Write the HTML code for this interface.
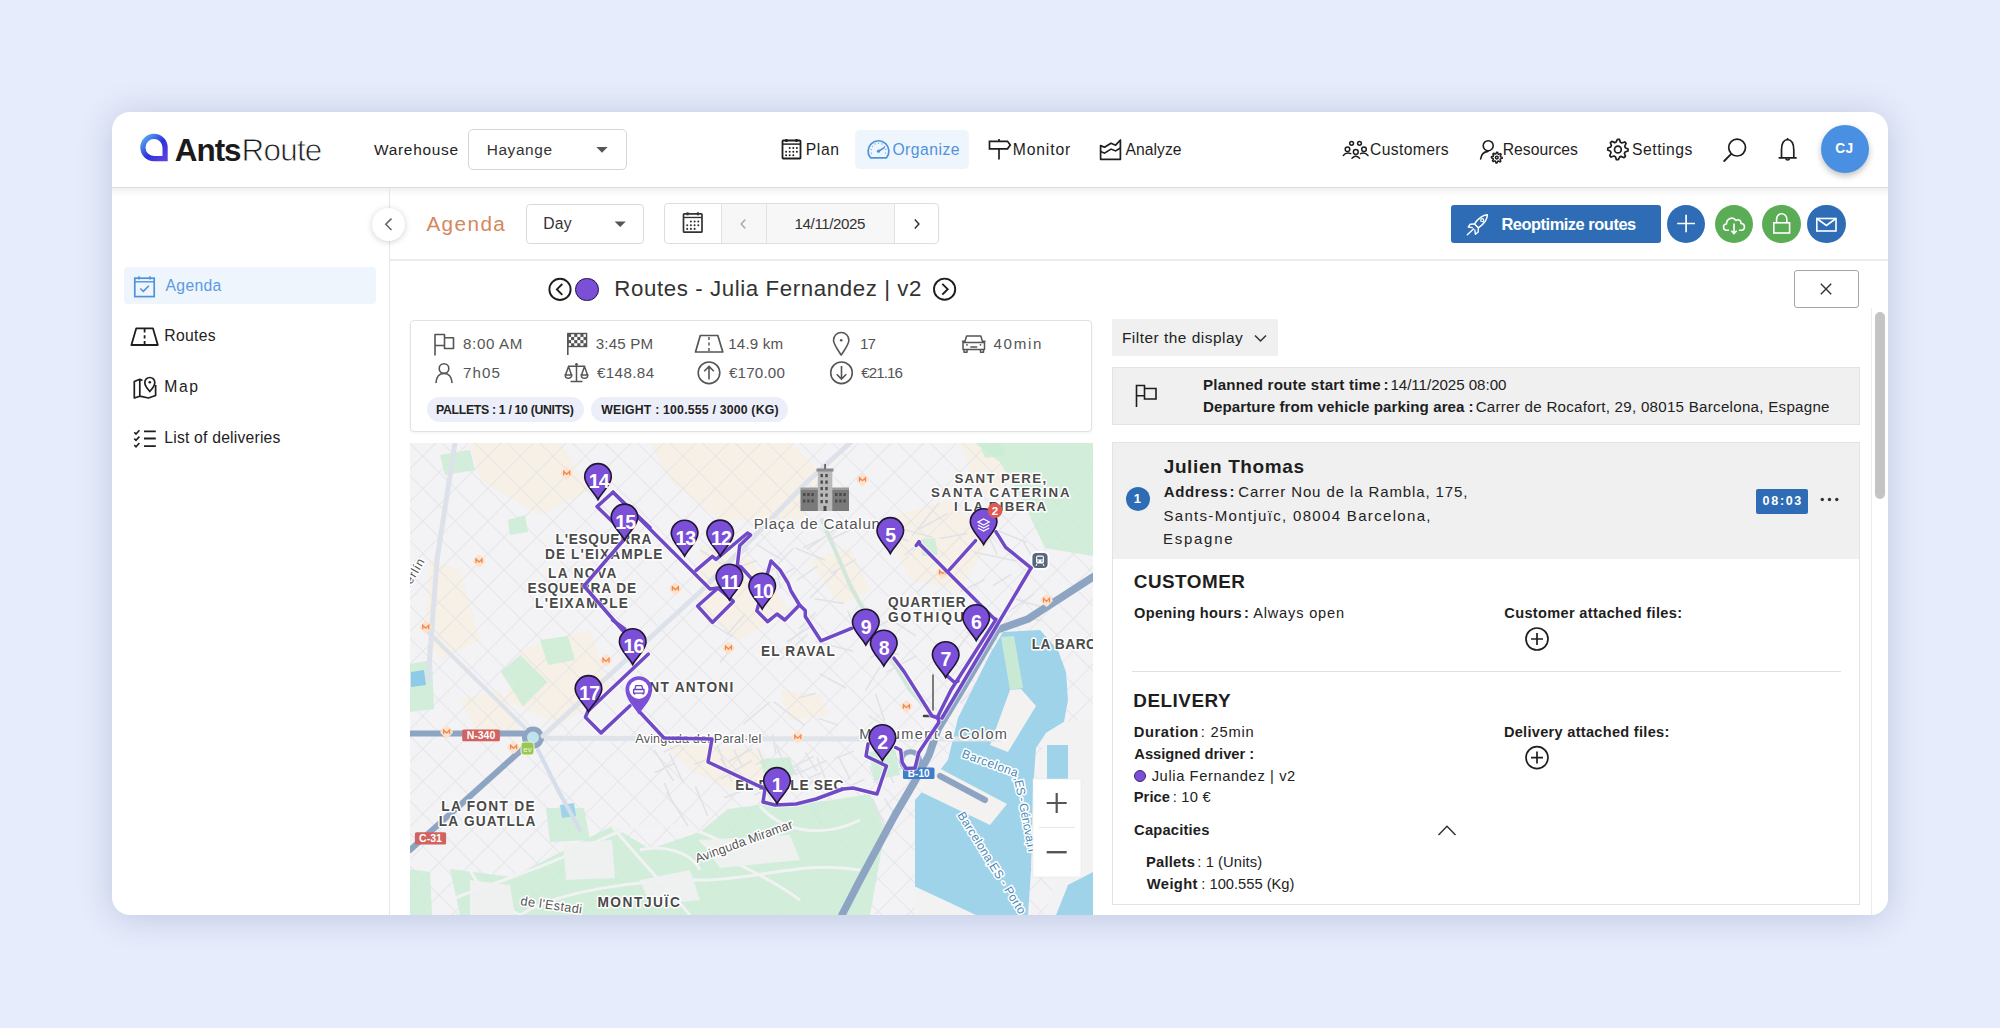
<!DOCTYPE html>
<html><head><meta charset="utf-8"><style>
*{margin:0;padding:0;box-sizing:border-box}
html,body{width:2000px;height:1028px;overflow:hidden}
body{background:#e6ecfb;font-family:"Liberation Sans",sans-serif;position:relative}
.t{position:absolute;white-space:nowrap;font-family:"Liberation Sans",sans-serif}
.a{position:absolute}
</style></head>
<body>
<div class="a" style="left:112px;top:112px;width:1776px;height:803px;background:#fff;border-radius:18px;box-shadow:0 3px 34px rgba(60,70,130,0.22)"></div>
<div class="a" style="left:112px;top:187px;width:1776px;height:1px;background:#dcdcdc"></div>
<div class="a" style="left:112px;top:188px;width:1776px;height:8px;background:linear-gradient(rgba(0,0,0,0.06),rgba(0,0,0,0))"></div>
<div class="a" style="left:389px;top:196px;width:1px;height:719px;background:#e6e6e6"></div>
<div class="a" style="left:389px;top:188px;width:1px;height:8px;background:#e6e6e6"></div>
<div class="a" style="left:390px;top:259px;width:1498px;height:2px;background:#ececec"></div>
<div class="a" style="left:468px;top:129px;width:159px;height:41px;border:1px solid #d6d6d6;border-radius:5px;background:#fff"></div>
<div class="a" style="left:526px;top:204px;width:118px;height:40px;border:1px solid #d9d9d9;border-radius:4px;background:#fff"></div>
<div class="a" style="left:855px;top:130px;width:114px;height:39px;background:#eef5fd;border-radius:5px"></div>
<div class="a" style="left:124px;top:267px;width:252px;height:37px;background:#eef5fd;border-radius:4px"></div>
<div class="a" style="left:664px;top:203px;width:275px;height:41px;border:1px solid #dedede;border-radius:4px;background:#fff"></div>
<div class="a" style="left:721px;top:204px;width:173px;height:39px;background:#f7f7f7"></div>
<div class="a" style="left:721px;top:204px;width:1px;height:39px;background:#e2e2e2"></div>
<div class="a" style="left:766px;top:204px;width:1px;height:39px;background:#e2e2e2"></div>
<div class="a" style="left:894px;top:204px;width:1px;height:39px;background:#e2e2e2"></div>
<div class="a" style="left:1451px;top:205px;width:210px;height:38px;background:#2e6db5;border-radius:3px"></div>
<div class="a" style="left:1666.75px;top:204.75px;width:38.5px;height:38.5px;border-radius:50%;background:#2e6db5"></div>
<div class="a" style="left:1714.75px;top:204.75px;width:38.5px;height:38.5px;border-radius:50%;background:#5aac55"></div>
<div class="a" style="left:1762.25px;top:204.75px;width:38.5px;height:38.5px;border-radius:50%;background:#5aac55"></div>
<div class="a" style="left:1807.25px;top:204.75px;width:38.5px;height:38.5px;border-radius:50%;background:#2e6db5"></div>
<div class="a" style="left:1820.5px;top:125px;width:48px;height:48px;border-radius:50%;background:#4a90e2;box-shadow:0 3px 6px rgba(0,0,0,0.25)"></div>
<div class="a" style="left:372.2px;top:207.8px;width:33px;height:33px;border-radius:50%;background:#fff;box-shadow:0 1px 6px rgba(0,0,0,0.18)"></div>
<div class="a" style="left:1794px;top:270px;width:65px;height:38px;border:1px solid #a5a5a5;border-radius:3px;background:#fff"></div>
<div class="a" style="left:410px;top:320px;width:682px;height:112px;border:1px solid #e2e2e2;border-radius:4px;background:#fff;box-shadow:0 1px 3px rgba(0,0,0,0.06)"></div>
<div class="a" style="left:426.6px;top:397px;width:157.2px;height:25px;border-radius:12.5px;background:#eceff9"></div>
<div class="a" style="left:590.8px;top:397px;width:197.7px;height:25px;border-radius:12.5px;background:#eceff9"></div>
<div class="a" style="left:1112px;top:319px;width:166px;height:37px;background:#f0f0f0;border-radius:2px"></div>
<div class="a" style="left:1112px;top:367px;width:748px;height:58px;background:#f0f0f0;border:1px solid #e3e3e3"></div>
<div class="a" style="left:1112px;top:442px;width:748px;height:463px;background:#fff;border:1px solid #e3e3e3"></div>
<div class="a" style="left:1113px;top:443px;width:746px;height:116px;background:#f0f0f0"></div>
<div class="a" style="left:1756px;top:489px;width:52px;height:25px;background:#2e6db5;border-radius:2px"></div>
<div class="a" style="left:1125.7px;top:486.6px;width:24px;height:24px;border-radius:50%;background:#2e6db5"></div>
<div class="a" style="left:1132px;top:671px;width:709px;height:1px;background:#e0e0e0"></div>
<div class="a" style="left:1134.2px;top:770px;width:12px;height:12px;border-radius:50%;background:#7b4fd6;border:1px solid #3a2870"></div>
<div class="a" style="left:1871px;top:308px;width:17px;height:607px;background:#fff;border-left:1px solid #ececec;border-bottom-right-radius:17px"></div>
<div class="a" style="left:1875px;top:312px;width:10px;height:187px;background:#c4c4c4;border-radius:5px"></div>
<div class="a" style="left:575.2px;top:277.7px;width:23.4px;height:23.4px;border-radius:50%;background:#7b4fd6;border:1.5px solid #1f1545"></div>
<svg class="a" style="left:0;top:0" width="2000" height="1028" viewBox="0 0 2000 1028">
<defs><linearGradient id="lg" x1="0" y1="0" x2="1" y2="1"><stop offset="0" stop-color="#5ab0f0"/><stop offset="0.55" stop-color="#2a35d8"/><stop offset="1" stop-color="#5b3fe6"/></linearGradient></defs>
<path d="M154,158.6 A11.1,11.1 0 1 1 165.1,147.5 L165.1,158.6 Z" fill="none" stroke="url(#lg)" stroke-width="5.2"/>
<path d="M596.4,147 L607.7,147 L602,152.8Z" fill="#555"/>
<path d="M614.6,221.4 L625.8,221.4 L620.2,227Z" fill="#555"/>
<rect x="782.5" y="140.5" width="18.0" height="18.0" fill="none" stroke="#1e1e1e" stroke-width="1.8" rx="0.8"/><line x1="782.5" y1="144.1" x2="800.5" y2="144.1" stroke="#1e1e1e" stroke-width="1.4400000000000002"/><line x1="786.46" y1="139.0" x2="786.46" y2="142.0" stroke="#1e1e1e" stroke-width="2.16"/><line x1="796.54" y1="139.0" x2="796.54" y2="142.0" stroke="#1e1e1e" stroke-width="2.16"/><circle cx="789.70" cy="148.06" r="0.99" fill="#1e1e1e"/><circle cx="793.30" cy="148.06" r="0.99" fill="#1e1e1e"/><circle cx="796.90" cy="148.06" r="0.99" fill="#1e1e1e"/><circle cx="786.10" cy="151.66" r="0.99" fill="#1e1e1e"/><circle cx="789.70" cy="151.66" r="0.99" fill="#1e1e1e"/><circle cx="793.30" cy="151.66" r="0.99" fill="#1e1e1e"/><circle cx="796.90" cy="151.66" r="0.99" fill="#1e1e1e"/><circle cx="786.10" cy="155.26" r="0.99" fill="#1e1e1e"/><circle cx="789.70" cy="155.26" r="0.99" fill="#1e1e1e"/><circle cx="793.30" cy="155.26" r="0.99" fill="#1e1e1e"/>
<path d="M870.5,157.8 A10.4,10.4 0 1 1 886.5,157.8 Z" fill="none" stroke="#4f92dc" stroke-width="1.7" stroke-linejoin="round"/>
<line x1="878.5" y1="151.2" x2="884.3" y2="147.6" stroke="#4f92dc" stroke-width="1.6" stroke-linecap="round"/><circle cx="878.5" cy="151.2" r="1.6" fill="#4f92dc"/>
<circle cx="871.55" cy="153.03" r="0.6" fill="#4f92dc"/>
<circle cx="871.16" cy="149.53" r="0.6" fill="#4f92dc"/>
<circle cx="872.44" cy="146.26" r="0.6" fill="#4f92dc"/>
<circle cx="875.08" cy="143.94" r="0.6" fill="#4f92dc"/>
<circle cx="878.50" cy="143.10" r="0.6" fill="#4f92dc"/>
<circle cx="881.92" cy="143.94" r="0.6" fill="#4f92dc"/>
<circle cx="884.56" cy="146.26" r="0.6" fill="#4f92dc"/>
<circle cx="885.84" cy="149.53" r="0.6" fill="#4f92dc"/>
<circle cx="885.45" cy="153.03" r="0.6" fill="#4f92dc"/>
<path d="M989.5,141.3 L1007.5,141.3 L1010.3,145 L1007.5,148.8 L989.5,148.8 Z" fill="none" stroke="#1e1e1e" stroke-width="1.7"/>
<line x1="999" y1="139" x2="999" y2="141.3" stroke="#1e1e1e" stroke-width="1.7"/><line x1="999" y1="148.8" x2="999" y2="159.5" stroke="#1e1e1e" stroke-width="1.7"/>
<path d="M1100.6,145.6 L1104.5,147.2 L1111,143.2 L1115.6,145.2 L1120.4,140 L1120.4,159.3 L1100.6,159.3 Z" fill="none" stroke="#1e1e1e" stroke-width="1.7" stroke-linejoin="round"/>
<path d="M1100.6,151.5 L1104.5,153.2 L1111,149 L1115.6,151 L1120.4,148" fill="none" stroke="#1e1e1e" stroke-width="1.5"/>
<circle cx="1351.6" cy="143.3" r="1.9" fill="none" stroke="#1e1e1e" stroke-width="1.5"/>
<circle cx="1359.5" cy="143.3" r="1.9" fill="none" stroke="#1e1e1e" stroke-width="1.5"/>
<circle cx="1347.5" cy="149.3" r="2.3" fill="none" stroke="#1e1e1e" stroke-width="1.5"/>
<circle cx="1364" cy="149.3" r="2.3" fill="none" stroke="#1e1e1e" stroke-width="1.5"/>
<circle cx="1355.8" cy="152" r="2.4" fill="none" stroke="#1e1e1e" stroke-width="1.5"/>
<path d="M1343.3,155.5 Q1346,151.8 1350.8,153.6 M1360.5,153.6 Q1365,151.8 1368,155.5 M1352,158.3 Q1355.8,154.4 1359.6,158.3" fill="none" stroke="#1e1e1e" stroke-width="1.5" stroke-linecap="round"/>
<circle cx="1488.2" cy="145.7" r="5" fill="none" stroke="#1e1e1e" stroke-width="1.6"/>
<path d="M1480.6,159 Q1481.5,152.2 1488,151.4" fill="none" stroke="#1e1e1e" stroke-width="1.6" stroke-linecap="round"/>
<path d="M1496.54,152.21 L1497.59,152.26 L1498.08,154.02 L1498.75,154.34 L1500.43,153.60 L1501.14,154.38 L1500.24,155.98 L1500.49,156.68 L1502.19,157.34 L1502.14,158.39 L1500.38,158.88 L1500.06,159.55 L1500.80,161.23 L1500.02,161.94 L1498.42,161.04 L1497.72,161.29 L1497.06,162.99 L1496.01,162.94 L1495.52,161.18 L1494.85,160.86 L1493.17,161.60 L1492.46,160.82 L1493.36,159.22 L1493.11,158.52 L1491.41,157.86 L1491.46,156.81 L1493.22,156.32 L1493.54,155.65 L1492.80,153.97 L1493.58,153.26 L1495.18,154.16 L1495.88,153.91Z" fill="none" stroke="#1e1e1e" stroke-width="1.5" stroke-linejoin="round"/><circle cx="1496.8" cy="157.6" r="1.4" fill="none" stroke="#1e1e1e" stroke-width="1.5"/>
<path d="M1617.40,139.31 L1619.40,139.41 L1620.46,142.34 L1621.81,142.98 L1624.75,141.94 L1626.09,143.42 L1624.77,146.25 L1625.27,147.65 L1628.09,149.00 L1627.99,151.00 L1625.06,152.06 L1624.42,153.41 L1625.46,156.35 L1623.98,157.69 L1621.15,156.37 L1619.75,156.87 L1618.40,159.69 L1616.40,159.59 L1615.34,156.66 L1613.99,156.02 L1611.05,157.06 L1609.71,155.58 L1611.03,152.75 L1610.53,151.35 L1607.71,150.00 L1607.81,148.00 L1610.74,146.94 L1611.38,145.59 L1610.34,142.65 L1611.82,141.31 L1614.65,142.63 L1616.05,142.13Z" fill="none" stroke="#1e1e1e" stroke-width="1.7" stroke-linejoin="round"/><circle cx="1617.9" cy="149.5" r="3.4" fill="none" stroke="#1e1e1e" stroke-width="1.7"/>
<circle cx="1737.1" cy="147.6" r="8.4" fill="none" stroke="#1e1e1e" stroke-width="1.7"/><line x1="1731" y1="154.2" x2="1724.2" y2="161" stroke="#1e1e1e" stroke-width="1.8" stroke-linecap="round"/>
<path d="M1787.6,139.5 C1782,140 1781.5,145 1781.5,150 L1781.5,157.6 L1779.3,157.9 L1796,157.9 L1793.8,157.6 L1793.8,150 C1793.8,145 1793.2,140 1787.6,139.5Z" fill="none" stroke="#1e1e1e" stroke-width="1.7" stroke-linejoin="round"/>
<path d="M1785.7,158.5 A2,2 0 0 0 1789.6,158.5" fill="none" stroke="#1e1e1e" stroke-width="1.5"/><line x1="1787.6" y1="138" x2="1787.6" y2="139.6" stroke="#1e1e1e" stroke-width="1.6"/>
<path d="M391.5,218.6 L385.8,224.3 L391.5,230" fill="none" stroke="#666" stroke-width="1.6"/>
<rect x="683.5" y="213.8" width="18.5" height="18.399999999999977" fill="none" stroke="#333" stroke-width="1.7" rx="0.8"/><line x1="683.5" y1="217.48000000000002" x2="702" y2="217.48000000000002" stroke="#333" stroke-width="1.36"/><line x1="687.57" y1="212.3" x2="687.57" y2="215.3" stroke="#333" stroke-width="2.04"/><line x1="697.93" y1="212.3" x2="697.93" y2="215.3" stroke="#333" stroke-width="2.04"/><circle cx="690.90" cy="221.53" r="1.02" fill="#333"/><circle cx="694.60" cy="221.53" r="1.02" fill="#333"/><circle cx="698.30" cy="221.53" r="1.02" fill="#333"/><circle cx="687.20" cy="225.21" r="1.02" fill="#333"/><circle cx="690.90" cy="225.21" r="1.02" fill="#333"/><circle cx="694.60" cy="225.21" r="1.02" fill="#333"/><circle cx="698.30" cy="225.21" r="1.02" fill="#333"/><circle cx="687.20" cy="228.89" r="1.02" fill="#333"/><circle cx="690.90" cy="228.89" r="1.02" fill="#333"/><circle cx="694.60" cy="228.89" r="1.02" fill="#333"/>
<path d="M745.3,219.5 L741.2,224 L745.3,228.5" fill="none" stroke="#aaa" stroke-width="1.5"/>
<path d="M914.8,219.5 L918.9,224 L914.8,228.5" fill="none" stroke="#333" stroke-width="1.5"/>
<path d="M1487.4,214.8 C1482,215.2 1478.2,218.5 1474.5,224 L1478.4,227.9 C1483.9,224.2 1487.2,220.4 1487.4,214.8Z" fill="none" stroke="#fff" stroke-width="1.5" stroke-linejoin="round"/>
<path d="M1474.5,224 L1470.3,224.2 L1468.3,227 L1472.3,227.6 M1478.4,227.9 L1478.2,232 L1475.4,234.2 L1474.8,230 M1473.5,229 L1467.3,234.8" fill="none" stroke="#fff" stroke-width="1.4" stroke-linejoin="round" stroke-linecap="round"/>
<circle cx="1482.2" cy="220.2" r="1.5" fill="none" stroke="#fff" stroke-width="1.2"/>
<path d="M1677.2,223.5 L1695,223.5 M1686.1,214.8 L1686.1,232.2" stroke="#fff" stroke-width="1.7"/>
<path d="M1729,230.2 L1726.5,230.2 C1722.5,230.2 1722.5,224 1726.5,224 C1726.5,218.5 1733,216 1736,220.5 C1738.5,218.8 1741.5,220.5 1741,223.5 C1745.5,223.5 1745.5,230.2 1741.5,230.2 L1739,230.2" fill="none" stroke="#fff" stroke-width="1.6" stroke-linejoin="round"/>
<path d="M1734,223.5 L1734,233.5 M1731.3,230.8 L1734,233.6 L1736.7,230.8" fill="none" stroke="#fff" stroke-width="1.6"/>
<rect x="1773.8" y="222.8" width="15.8" height="10.2" fill="none" stroke="#fff" stroke-width="1.6"/><path d="M1776.6,222.8 L1776.6,218.8 A5,5 0 0 1 1786.8,218.8 L1786.8,222.8" fill="none" stroke="#fff" stroke-width="1.6"/>
<rect x="1816.8" y="218.5" width="19.2" height="12.5" fill="none" stroke="#fff" stroke-width="1.6"/><path d="M1816.8,218.5 L1826.4,225.5 L1836,218.5" fill="none" stroke="#fff" stroke-width="1.6"/>
<rect x="134.8" y="278.2" width="19.4" height="18.4" fill="none" stroke="#4f92dc" stroke-width="1.7"/><line x1="134.8" y1="281.8" x2="154.2" y2="281.8" stroke="#4f92dc" stroke-width="1.4"/>
<line x1="139" y1="276.2" x2="139" y2="279.5" stroke="#4f92dc" stroke-width="1.6"/><line x1="150" y1="276.2" x2="150" y2="279.5" stroke="#4f92dc" stroke-width="1.6"/>
<path d="M140.3,288.5 L143.4,291.4 L148.8,285.8" fill="none" stroke="#4f92dc" stroke-width="1.6"/>
<path d="M136.2,328.4 L153,328.4 L157.8,345 L131.4,345 Z" fill="none" stroke="#1e1e1e" stroke-width="1.8" stroke-linejoin="round"/>
<path d="M144.6,329 L144.6,332.5 M144.6,335.2 L144.6,338.5 M144.6,341 L144.6,344.5" stroke="#1e1e1e" stroke-width="1.8"/>
<path d="M134.3,381.5 L139.8,379.3 L139.8,396.2 L134.3,398 Z M139.8,379.3 L142.5,380.5 M139.8,396.2 L148.5,398 L155.6,395.5 L155.6,385" fill="none" stroke="#1e1e1e" stroke-width="1.7" stroke-linejoin="round"/>
<path d="M149.8,391.5 C146.2,387.5 144.8,385 144.8,382.5 A5,5 0 0 1 154.8,382.5 C154.8,385 153.4,387.5 149.8,391.5Z" fill="none" stroke="#1e1e1e" stroke-width="1.7"/><circle cx="149.8" cy="382.3" r="1.3" fill="#1e1e1e"/>
<path d="M134.3,432.2 L136,434 L139.4,430.2 M134.3,438.6 L136,440.4 L139.4,436.6 M134.3,445 L136,446.8 L139.4,443" fill="none" stroke="#1e1e1e" stroke-width="1.6"/>
<path d="M144,431.3 L155.8,431.3 M144,438.5 L155.8,438.5 M144,446.2 L155.8,446.2" stroke="#1e1e1e" stroke-width="1.8"/>
<circle cx="560" cy="289.4" r="10.6" fill="none" stroke="#1e1e1e" stroke-width="1.9"/><path d="M562.3,284 L556.9,289.4 L562.3,294.8" fill="none" stroke="#1e1e1e" stroke-width="1.9"/>
<circle cx="944.6" cy="289.2" r="10.6" fill="none" stroke="#1e1e1e" stroke-width="1.9"/><path d="M942.3,283.8 L947.7,289.2 L942.3,294.6" fill="none" stroke="#1e1e1e" stroke-width="1.9"/>
<path d="M1820.8,283.8 L1831.2,294.2 M1831.2,283.8 L1820.8,294.2" stroke="#333" stroke-width="1.4"/>
<path d="M435,355.5 L435,334.5 L444.5,334.5 L444.5,337.8 L453.5,337.8 L453.5,348.5 L444.5,348.5 L444.5,345.5 L435,345.5 M444.5,337.8 L444.5,345.5" fill="none" stroke="#555" stroke-width="1.6" stroke-linejoin="round"/>
<circle cx="444" cy="368.5" r="4.8" fill="none" stroke="#555" stroke-width="1.6"/><path d="M436,382.5 C436.5,376 440,373.5 444,373.5 C448,373.5 451.5,376 452,382.5" fill="none" stroke="#555" stroke-width="1.6" stroke-linecap="round"/>
<line x1="567.8" y1="334" x2="567.8" y2="355" stroke="#555" stroke-width="1.6"/><rect x="567.8" y="333.5" width="18.8" height="13" fill="none" stroke="#555" stroke-width="1.4"/>
<rect x="568.00" y="333.80" width="3.1" height="3.15" fill="#555"/>
<rect x="568.00" y="340.10" width="3.1" height="3.15" fill="#555"/>
<rect x="571.10" y="336.95" width="3.1" height="3.15" fill="#555"/>
<rect x="571.10" y="343.25" width="3.1" height="3.15" fill="#555"/>
<rect x="574.20" y="333.80" width="3.1" height="3.15" fill="#555"/>
<rect x="574.20" y="340.10" width="3.1" height="3.15" fill="#555"/>
<rect x="577.30" y="336.95" width="3.1" height="3.15" fill="#555"/>
<rect x="577.30" y="343.25" width="3.1" height="3.15" fill="#555"/>
<rect x="580.40" y="333.80" width="3.1" height="3.15" fill="#555"/>
<rect x="580.40" y="340.10" width="3.1" height="3.15" fill="#555"/>
<rect x="583.50" y="336.95" width="3.1" height="3.15" fill="#555"/>
<rect x="583.50" y="343.25" width="3.1" height="3.15" fill="#555"/>
<path d="M576.5,364 L576.5,381 M570.5,381.5 L582.5,381.5 M568,366.3 L585.2,366.3 M568.5,366.5 L565.5,375 M568.5,366.5 L571.5,375 M584.5,366.5 L581.5,375 M584.5,366.5 L587.5,375" fill="none" stroke="#555" stroke-width="1.5"/>
<path d="M565.2,375 A3.3,3.3 0 0 0 571.8,375 Z M581.2,375 A3.3,3.3 0 0 0 587.8,375 Z" fill="none" stroke="#555" stroke-width="1.5"/><circle cx="576.5" cy="364.3" r="1.3" fill="#555"/>
<path d="M700.3,335.5 L717.8,335.5 L722.8,352 L695.5,352 Z" fill="none" stroke="#555" stroke-width="1.7" stroke-linejoin="round"/><path d="M709,337 L709,340 M709,342.5 L709,345.5 M709,348 L709,351" stroke="#555" stroke-width="1.5"/>
<circle cx="709" cy="372.8" r="10.8" fill="none" stroke="#555" stroke-width="1.6"/><path d="M709,379.5 L709,366.5 M704.2,371.2 L709,366.4 L713.8,371.2" fill="none" stroke="#555" stroke-width="1.6"/>
<circle cx="841.5" cy="372.8" r="10.8" fill="none" stroke="#555" stroke-width="1.6"/><path d="M841.5,366 L841.5,379 M836.7,374.3 L841.5,379.1 L846.3,374.3" fill="none" stroke="#555" stroke-width="1.6"/>
<path d="M841.2,355 C836.5,348 833.5,344 833.5,340.2 A7.7,7.7 0 0 1 848.9,340.2 C848.9,344 845.9,348 841.2,355Z" fill="none" stroke="#555" stroke-width="1.6" stroke-linejoin="round"/><circle cx="841.2" cy="340.2" r="1.3" fill="#555"/>
<path d="M964.6,342.5 L966.6,336 L980.8,336 L982.8,342.5 M963,342.5 L984.5,342.5 L984.5,349.5 L963,349.5 Z M962,341.3 L965,341.3 M982.5,341.3 L985.5,341.3 M964,349.5 L964,352.3 L967,352.3 L967,349.5 M980.5,349.5 L980.5,352.3 L983.5,352.3 L983.5,349.5 M970.3,347 L977.2,347" fill="none" stroke="#555" stroke-width="1.5" stroke-linejoin="round"/><circle cx="967" cy="344.8" r="0.9" fill="#555"/><circle cx="980.5" cy="344.8" r="0.9" fill="#555"/>
<path d="M1255,335.5 L1260.5,341 L1266,335.5" fill="none" stroke="#333" stroke-width="1.5"/>
<path d="M1136.5,407 L1136.5,385.5 L1144.5,385.5 L1144.5,388.5 L1156,388.5 L1156,399 L1144.5,399 L1144.5,395.8 L1136.5,395.8 M1144.5,388.5 L1144.5,395.8" fill="none" stroke="#1e1e1e" stroke-width="1.6"/>
<circle cx="1822.3" cy="499.5" r="1.7" fill="#333"/>
<circle cx="1829.5" cy="499.5" r="1.7" fill="#333"/>
<circle cx="1836.8" cy="499.5" r="1.7" fill="#333"/>
<circle cx="1537" cy="639" r="11" fill="none" stroke="#1e1e1e" stroke-width="1.7"/><path d="M1531,639 L1543,639 M1537,633 L1537,645" stroke="#1e1e1e" stroke-width="1.7"/>
<circle cx="1537" cy="757.6" r="11" fill="none" stroke="#1e1e1e" stroke-width="1.7"/><path d="M1531,757.6 L1543,757.6 M1537,751.6 L1537,763.6" stroke="#1e1e1e" stroke-width="1.7"/>
<path d="M1438.5,835 L1447,826.3 L1455.5,835" fill="none" stroke="#333" stroke-width="1.5"/>
</svg>
<svg class="a" style="left:410px;top:443px" width="683" height="472" viewBox="410 443 683 472">
<defs><clipPath id="mc"><rect x="410" y="443" width="683" height="472"/></clipPath><pattern id="grid" patternUnits="userSpaceOnUse" width="23" height="23" patternTransform="rotate(45)"><rect width="23" height="23" fill="none"/><path d="M0,0 L23,0 M0,0 L0,23" stroke="#dcdee3" stroke-width="1.5"/></pattern><pattern id="grid2" patternUnits="userSpaceOnUse" width="18" height="18" patternTransform="rotate(28)"><path d="M0,0 L18,0 M0,0 L0,18" stroke="#e4e5ea" stroke-width="1.6"/></pattern></defs>
<g clip-path="url(#mc)">
<rect x="410" y="443" width="683" height="472" fill="#f3f2f4"/>
<path d="M470,443 L560,443 L590,490 L540,515 L480,480Z" fill="#f7eedb" opacity="0.55"/>
<path d="M650,443 L790,443 L830,480 L800,520 L720,520 L670,480Z" fill="#f7eedb" opacity="0.55"/>
<path d="M700,545 L750,560 L790,610 L740,640 L700,610Z" fill="#f7eedb" opacity="0.55"/>
<path d="M810,560 L850,548 L870,590 L840,605Z" fill="#f7eedb" opacity="0.55"/>
<path d="M880,520 L950,500 L990,540 L960,590 L910,580Z" fill="#f7eedb" opacity="0.55"/>
<path d="M430,560 L460,570 L480,640 L440,660 L425,630Z" fill="#f7eedb" opacity="0.55"/>
<path d="M520,650 L590,630 L610,690 L560,725 L505,700Z" fill="#f7eedb" opacity="0.55"/>
<path d="M665,745 L760,750 L790,780 L730,790 L690,770Z" fill="#f7eedb" opacity="0.55"/>
<path d="M780,690 L820,695 L830,715 L790,720Z" fill="#f7eedb" opacity="0.55"/>
<path d="M960,443 L1030,443 L1020,480 L980,495Z" fill="#f7eedb" opacity="0.55"/>
<path d="M460,700 L500,690 L520,730 L480,735Z" fill="#f7eedb" opacity="0.55"/>
<rect x="410" y="443" width="683" height="472" fill="url(#grid)" opacity="0.75"/>
<path d="M806.9,549.7 L839.0,526.5 M731.1,649.0 L719.9,662.6 M838.0,570.4 L809.7,598.3 M740.9,566.3 L756.6,560.4 M893.2,526.4 L932.5,537.4 M795.6,548.2 L825.0,560.1 M925.1,538.7 L904.6,555.0 M880.8,529.4 L908.2,541.3 M875.5,693.8 L884.7,720.8 M798.9,697.7 L815.8,693.2 M799.1,628.9 L815.8,612.2 M1023.5,542.2 L1036.4,563.8 M1008.0,612.0 L1034.0,593.8 M960.4,703.2 L983.2,679.6 M891.4,619.9 L915.9,635.8 M919.2,529.0 L947.6,513.6 M924.8,617.5 L956.3,602.0 M707.4,621.2 L732.8,636.9 M772.0,581.1 L795.1,567.7 M987.6,533.5 L997.1,554.8 M745.2,614.0 L727.1,634.7 M818.4,718.4 L837.6,724.9 M776.5,568.7 L780.7,588.7 M793.0,548.5 L770.9,571.6 M870.1,657.0 L897.7,649.1 M987.4,733.9 L1013.4,727.3 M831.7,538.8 L850.3,529.8 M1024.9,616.3 L1040.9,620.8 M700.1,549.8 L728.1,567.9 M723.2,562.8 L734.9,582.1 M814.6,598.8 L843.9,603.4 M802.9,548.1 L823.3,537.6 M973.5,552.1 L1016.2,560.9 M819.4,673.7 L840.6,684.8 M912.2,535.9 L938.7,503.1 M817.4,566.2 L796.9,580.3 M773.6,701.6 L805.0,725.7 M944.2,567.2 L917.0,592.2 M855.8,559.5 L831.1,573.5 M1015.2,598.9 L1042.9,607.5 M811.5,626.0 L786.7,641.9 M915.5,698.9 L931.6,708.1 M828.2,678.6 L846.2,688.2 M960.4,591.5 L984.7,579.7 M756.1,544.2 L780.9,559.2 M916.4,655.7 L886.0,672.4 M815.6,641.2 L853.3,651.2 M939.7,538.6 L967.2,533.5 M987.7,705.0 L1008.3,710.6 M865.4,690.6 L879.8,667.1 M743.3,724.3 L769.9,701.8 M969.0,633.9 L957.2,649.5 M868.5,715.7 L901.0,735.9 M749.4,547.6 L723.8,566.2 M807.6,634.2 L779.6,660.3 M991.5,528.1 L1026.8,542.5 M867.5,644.2 L899.2,654.7 M866.8,632.8 L893.2,618.0 M966.4,631.8 L1000.5,655.1 M1010.9,574.7 L992.9,585.6 M847.7,610.8 L854.4,626.6 M779.4,531.8 L795.8,522.9 M956.4,731.1 L974.7,725.0 M772.5,734.1 L776.0,753.6 M817.0,757.3 L826.1,780.7 M755.3,764.6 L769.5,758.5 M788.5,769.2 L813.4,756.5 M723.9,797.8 L756.4,785.8 M892.9,750.8 L911.5,783.5 M695.4,786.6 L707.8,815.9 M886.5,767.3 L893.7,783.0 M664.4,782.9 L672.7,802.9 M654.2,749.9 L673.4,780.8 M666.7,792.5 L688.1,826.0 M754.4,795.3 L782.5,778.5 M884.5,798.3 L895.2,815.3 M728.0,761.8 L752.2,748.8 M694.5,764.1 L709.4,758.6 M654.6,772.8 L673.7,763.7 M761.8,781.2 L774.0,807.1 M872.2,798.4 L888.8,834.3 M735.7,790.8 L756.8,780.1 M663.6,752.1 L697.3,736.9 M757.7,748.0 L770.0,777.3 M720.5,758.3 L730.9,774.9 M717.3,745.2 L731.8,781.7 M786.8,758.4 L796.6,775.4 M733.8,749.6 L742.9,767.5 M776.2,745.3 L783.6,762.3 M796.7,766.7 L806.9,784.8 M796.4,774.1 L826.5,760.7 M869.8,766.4 L881.1,791.3 M721.0,779.0 L751.8,760.5 M873.0,779.5 L904.5,767.3 M792.1,789.7 L819.6,778.6 M873.2,782.6 L887.0,774.4 M809.3,797.8 L820.7,824.4 M806.9,779.4 L820.5,772.9 M849.4,786.2 L864.6,779.4 M834.2,758.9 L853.6,751.1 M839.1,757.7 L850.3,779.6 M769.8,782.6 L798.0,769.7 M669.4,753.1 L683.1,782.3 M805.3,752.3 L816.8,770.8" fill="none" stroke="#e0e2e7" stroke-width="1.5"/>
<path d="M822,520 L850,585 L880,640 L910,690 L933,716" fill="none" stroke="#d3e6da" stroke-width="4" stroke-linejoin="round" stroke-linecap="round" />
<path d="M450,869 L512,877 L612,826 L650,849 L700,832 L728,809 L765,804 L826,801 L870,794 L885,830 L870,915 L460,915Z" fill="#c9ecd5" opacity="0.8"/>
<path d="M408,869 L430,872 L432,915 L408,915Z" fill="#c9ecd5" opacity="0.8"/>
<path d="M546,808 L584,808 L590,840 L550,842Z" fill="#c9ecd5" opacity="0.8"/>
<path d="M500.7,671.4 L520.6,655 L547.5,681.9 L523,706.4Z" fill="#c9ecd5" opacity="0.8"/>
<path d="M410,664 L432,660 L434,709 L410,712Z" fill="#c9ecd5" opacity="0.8"/>
<path d="M975,443 L1093,443 L1093,556 L1045,548 L1022,500 L1000,462Z" fill="#c9ecd5" opacity="0.8"/>
<path d="M440,455 L470,450 L475,470 L445,475Z" fill="#c9ecd5" opacity="0.8"/>
<path d="M508,520 L525,515 L528,532 L510,535Z" fill="#c9ecd5" opacity="0.8"/>
<path d="M540,640 L568,636 L575,660 L548,665Z" fill="#c9ecd5" opacity="0.8"/>
<path d="M760,760 L790,757 L795,775 L765,778Z" fill="#c9ecd5" opacity="0.8"/>
<path d="M868,752 L895,748 L900,775 L875,780Z" fill="#c9ecd5" opacity="0.8"/>
<path d="M980,445 L1000,443 L1005,455 L985,458Z" fill="#c9ecd5" opacity="0.8"/>
<path d="M920,540 L935,538 L938,555 L922,556Z" fill="#c9ecd5" opacity="0.8"/>
<path d="M450,900 C500,880 540,870 600,840 S700,830 740,850" fill="none" stroke="#f2f2f3" stroke-width="3"/>
<path d="M520,915 C560,890 640,880 700,880 S800,860 860,870" fill="none" stroke="#f2f2f3" stroke-width="3"/>
<path d="M612,826 C640,860 660,880 690,915" fill="none" stroke="#f2f2f3" stroke-width="3"/>
<path d="M700,840 C720,860 760,870 800,900" fill="none" stroke="#f2f2f3" stroke-width="3"/>
<path d="M760,806 C780,830 820,840 860,820" fill="none" stroke="#f2f2f3" stroke-width="3"/>
<path d="M470,870 C480,890 500,905 520,915" fill="none" stroke="#f2f2f3" stroke-width="3"/>
<path d="M640,850 C660,845 690,850 700,870" fill="none" stroke="#f2f2f3" stroke-width="3"/>
<path d="M563,843 L612,840 L615,878 L566,880Z" fill="#f1f1f2" opacity="0.9"/>
<path d="M700,840 L790,835 L800,860 L720,868Z" fill="#f1f1f2" opacity="0.9"/>
<path d="M470,880 L510,885 L515,915 L470,915Z" fill="#f1f1f2" opacity="0.9"/>
<path d="M640,880 L690,870 L700,900 L650,905Z" fill="#f1f1f2" opacity="0.9"/>
<path d="M1003,632 L1040,630 L1058,650 L1066,672 L1068,700 L1064,722 L1046,733 L1036,748 L1033,790 L1031,870 L1028,915 L915,915 L915,800 L928,785 L948,760 L958,718 L990,654Z" fill="#9fd3ea" />
<path d="M411,672 L424,670 L426,685 L411,687Z" fill="#8ecbe8" />
<path d="M560,805 L574,803 L576,816 L562,818Z" fill="#9fd3ea" />
<path d="M1001,637 L1014,636 L1023,688 L1010,690Z" fill="#c8ead4" />
<path d="M1021,689 L1036,706 L1008,752 L990,745 L1010,690Z" fill="#f3f2f1" />
<path d="M935,766 L1007,804 L990,825 L921,792Z" fill="#f3f2f1" />
<path d="M940,776 L985,800" fill="none" stroke="#8ea3c2" stroke-width="6" stroke-linejoin="round" stroke-linecap="round" />
<path d="M1046,733 L1064,722 L1093,720 L1093,872 L1068,885 L1056,915 L1044,915 L1058,877 L1040,877 L1036,790 L1040,755Z" fill="#f2f2f3" />
<path d="M914,886 L976,915 L914,915Z" fill="#f2f2f3" />
<path d="M1047,745 L1068,745 L1068,785 L1047,785Z" fill="#9fd3ea" />
<path d="M1068,885 L1093,872 L1093,915 L1056,915Z" fill="#9fd3ea" />
<path d="M543,738.3 L1000,739" fill="none" stroke="#dfe3ea" stroke-width="5" stroke-linejoin="round" stroke-linecap="round" />
<path d="M410,733.5 L523,733.5" fill="none" stroke="#8ea4c3" stroke-width="6" stroke-linejoin="round" stroke-linecap="round" />
<circle cx="533" cy="737.6" r="8.5" fill="#bfe3ea" stroke="#8ea4c3" stroke-width="5"/>
<path d="M525,728 L428,632" fill="none" stroke="#dde2ea" stroke-width="4" stroke-linejoin="round" stroke-linecap="round" />
<path d="M410,850 L527,745" fill="none" stroke="#8ea4c3" stroke-width="6" stroke-linejoin="round" stroke-linecap="round" />
<path d="M455,443 L437,560 L428,680" fill="none" stroke="#dde2ea" stroke-width="5" stroke-linejoin="round" stroke-linecap="round" />
<path d="M543,736 L700,592 L807,482 L850,443" fill="none" stroke="#dde2ea" stroke-width="5" stroke-linejoin="round" stroke-linecap="round" />
<path d="M538,750 L558,790 L580,830" fill="none" stroke="#d5dcea" stroke-width="4" stroke-linejoin="round" stroke-linecap="round" />
<path d="M1093,577 L1028,619 L997,630 L964,686 L938,729 L929,755 L915,781 L895,815 L860,880 L842,915" fill="none" stroke="#8ea4c3" stroke-width="7.5" stroke-linejoin="round" stroke-linecap="round" />
<circle cx="910.5" cy="760.7" r="9" fill="none" stroke="#8ea3c2" stroke-width="5"/>
<g transform="translate(566.7,473.3)"><rect x="-5" y="-5" width="10" height="10" rx="2" fill="#fde2cf" transform="rotate(45)"/><path d="M-3,2 L-3,-2 L0,1 L3,-2 L3,2" fill="none" stroke="#f08a4b" stroke-width="1.3"/></g>
<g transform="translate(479,561)"><rect x="-5" y="-5" width="10" height="10" rx="2" fill="#fde2cf" transform="rotate(45)"/><path d="M-3,2 L-3,-2 L0,1 L3,-2 L3,2" fill="none" stroke="#f08a4b" stroke-width="1.3"/></g>
<g transform="translate(425.8,627.2)"><rect x="-5" y="-5" width="10" height="10" rx="2" fill="#fde2cf" transform="rotate(45)"/><path d="M-3,2 L-3,-2 L0,1 L3,-2 L3,2" fill="none" stroke="#f08a4b" stroke-width="1.3"/></g>
<g transform="translate(675.4,588.8)"><rect x="-5" y="-5" width="10" height="10" rx="2" fill="#fde2cf" transform="rotate(45)"/><path d="M-3,2 L-3,-2 L0,1 L3,-2 L3,2" fill="none" stroke="#f08a4b" stroke-width="1.3"/></g>
<g transform="translate(606,660.4)"><rect x="-5" y="-5" width="10" height="10" rx="2" fill="#fde2cf" transform="rotate(45)"/><path d="M-3,2 L-3,-2 L0,1 L3,-2 L3,2" fill="none" stroke="#f08a4b" stroke-width="1.3"/></g>
<g transform="translate(446.6,732)"><rect x="-5" y="-5" width="10" height="10" rx="2" fill="#fde2cf" transform="rotate(45)"/><path d="M-3,2 L-3,-2 L0,1 L3,-2 L3,2" fill="none" stroke="#f08a4b" stroke-width="1.3"/></g>
<g transform="translate(513.6,747.3)"><rect x="-5" y="-5" width="10" height="10" rx="2" fill="#fde2cf" transform="rotate(45)"/><path d="M-3,2 L-3,-2 L0,1 L3,-2 L3,2" fill="none" stroke="#f08a4b" stroke-width="1.3"/></g>
<g transform="translate(728.5,648)"><rect x="-5" y="-5" width="10" height="10" rx="2" fill="#fde2cf" transform="rotate(45)"/><path d="M-3,2 L-3,-2 L0,1 L3,-2 L3,2" fill="none" stroke="#f08a4b" stroke-width="1.3"/></g>
<g transform="translate(797.8,737.2)"><rect x="-5" y="-5" width="10" height="10" rx="2" fill="#fde2cf" transform="rotate(45)"/><path d="M-3,2 L-3,-2 L0,1 L3,-2 L3,2" fill="none" stroke="#f08a4b" stroke-width="1.3"/></g>
<g transform="translate(862.5,479.7)"><rect x="-5" y="-5" width="10" height="10" rx="2" fill="#fde2cf" transform="rotate(45)"/><path d="M-3,2 L-3,-2 L0,1 L3,-2 L3,2" fill="none" stroke="#f08a4b" stroke-width="1.3"/></g>
<g transform="translate(942.5,572.6)"><rect x="-5" y="-5" width="10" height="10" rx="2" fill="#fde2cf" transform="rotate(45)"/><path d="M-3,2 L-3,-2 L0,1 L3,-2 L3,2" fill="none" stroke="#f08a4b" stroke-width="1.3"/></g>
<g transform="translate(906.4,706.7)"><rect x="-5" y="-5" width="10" height="10" rx="2" fill="#fde2cf" transform="rotate(45)"/><path d="M-3,2 L-3,-2 L0,1 L3,-2 L3,2" fill="none" stroke="#f08a4b" stroke-width="1.3"/></g>
<g transform="translate(1046.5,600.4)"><rect x="-5" y="-5" width="10" height="10" rx="2" fill="#fde2cf" transform="rotate(45)"/><path d="M-3,2 L-3,-2 L0,1 L3,-2 L3,2" fill="none" stroke="#f08a4b" stroke-width="1.3"/></g>
<text x="954.4" y="482.7" font-family="Liberation Sans" font-weight="700" font-size="13.29" fill="#4a4a4a" textLength="91.8" lengthAdjust="spacing" stroke="#fff" stroke-width="3" stroke-linejoin="round" paint-order="stroke">SANT PERE,</text>
<text x="931" y="497.2" font-family="Liberation Sans" font-weight="700" font-size="13.29" fill="#4a4a4a" textLength="138.5" lengthAdjust="spacing" stroke="#fff" stroke-width="3" stroke-linejoin="round" paint-order="stroke">SANTA CATERINA</text>
<text x="954" y="511.2" font-family="Liberation Sans" font-weight="700" font-size="13.29" fill="#4a4a4a" textLength="92.2" lengthAdjust="spacing" stroke="#fff" stroke-width="3" stroke-linejoin="round" paint-order="stroke">I LA RIBERA</text>
<text x="753.7" y="528.5" font-family="Liberation Sans" font-weight="400" font-size="15.14" fill="#555" textLength="126.3" lengthAdjust="spacing" stroke="#fff" stroke-width="3" stroke-linejoin="round" paint-order="stroke">Plaça de Catalun</text>
<text x="887.9" y="607" font-family="Liberation Sans" font-weight="700" font-size="13.71" fill="#4a4a4a" textLength="77.7" lengthAdjust="spacing" stroke="#fff" stroke-width="3" stroke-linejoin="round" paint-order="stroke">QUARTIER</text>
<text x="887.9" y="621.6" font-family="Liberation Sans" font-weight="700" font-size="13.71" fill="#4a4a4a" textLength="87.1" lengthAdjust="spacing" stroke="#fff" stroke-width="3" stroke-linejoin="round" paint-order="stroke">GOTHIQUE</text>
<text x="760.9" y="656" font-family="Liberation Sans" font-weight="700" font-size="13.71" fill="#4a4a4a" textLength="74.0" lengthAdjust="spacing" stroke="#fff" stroke-width="3" stroke-linejoin="round" paint-order="stroke">EL RAVAL</text>
<text x="1031.7" y="648.5" font-family="Liberation Sans" font-weight="700" font-size="13.71" fill="#4a4a4a" textLength="64.3" lengthAdjust="spacing" stroke="#fff" stroke-width="3" stroke-linejoin="round" paint-order="stroke">LA BARC</text>
<text x="555.6" y="543.9" font-family="Liberation Sans" font-weight="700" font-size="13.71" fill="#4a4a4a" textLength="95.7" lengthAdjust="spacing" stroke="#fff" stroke-width="3" stroke-linejoin="round" paint-order="stroke">L'ESQUERRA</text>
<text x="545" y="558.6" font-family="Liberation Sans" font-weight="700" font-size="13.71" fill="#4a4a4a" textLength="117.5" lengthAdjust="spacing" stroke="#fff" stroke-width="3" stroke-linejoin="round" paint-order="stroke">DE L'EIXAMPLE</text>
<text x="547.9" y="578.2" font-family="Liberation Sans" font-weight="700" font-size="13.71" fill="#4a4a4a" textLength="68.4" lengthAdjust="spacing" stroke="#fff" stroke-width="3" stroke-linejoin="round" paint-order="stroke">LA NOVA</text>
<text x="527.6" y="593" font-family="Liberation Sans" font-weight="700" font-size="13.71" fill="#4a4a4a" textLength="108.5" lengthAdjust="spacing" stroke="#fff" stroke-width="3" stroke-linejoin="round" paint-order="stroke">ESQUERRA DE</text>
<text x="535" y="607.6" font-family="Liberation Sans" font-weight="700" font-size="13.71" fill="#4a4a4a" textLength="93.0" lengthAdjust="spacing" stroke="#fff" stroke-width="3" stroke-linejoin="round" paint-order="stroke">L'EIXAMPLE</text>
<text x="649.3" y="691.8" font-family="Liberation Sans" font-weight="700" font-size="13.71" fill="#4a4a4a" textLength="84.0" lengthAdjust="spacing" stroke="#fff" stroke-width="3" stroke-linejoin="round" paint-order="stroke">NT ANTONI</text>
<text x="635.3" y="742.6" font-family="Liberation Sans" font-weight="400" font-size="12.86" fill="#555" textLength="126.1" lengthAdjust="spacing" stroke="#fff" stroke-width="3" stroke-linejoin="round" paint-order="stroke">Avinguda del Paral·lel</text>
<text x="735.2" y="790.4" font-family="Liberation Sans" font-weight="700" font-size="13.71" fill="#4a4a4a" textLength="108.2" lengthAdjust="spacing" stroke="#fff" stroke-width="3" stroke-linejoin="round" paint-order="stroke">EL POBLE SEC</text>
<text x="859.2" y="739.2" font-family="Liberation Sans" font-weight="400" font-size="14.57" fill="#555" textLength="147.8" lengthAdjust="spacing" stroke="#fff" stroke-width="3" stroke-linejoin="round" paint-order="stroke">Monument a Colom</text>
<text x="441.2" y="811.3" font-family="Liberation Sans" font-weight="700" font-size="13.71" fill="#4a4a4a" textLength="93.5" lengthAdjust="spacing" stroke="#fff" stroke-width="3" stroke-linejoin="round" paint-order="stroke">LA FONT DE</text>
<text x="438.8" y="826.1" font-family="Liberation Sans" font-weight="700" font-size="13.71" fill="#4a4a4a" textLength="96.6" lengthAdjust="spacing" stroke="#fff" stroke-width="3" stroke-linejoin="round" paint-order="stroke">LA GUATLLA</text>
<text x="597.4" y="906.5" font-family="Liberation Sans" font-weight="700" font-size="13.71" fill="#4a4a4a" textLength="82.4" lengthAdjust="spacing" stroke="#fff" stroke-width="3" stroke-linejoin="round" paint-order="stroke">MONTJUÏC</text>
<g transform="rotate(-20 697 863)"><text x="697" y="863" font-family="Liberation Sans" font-weight="400" font-size="12.86" fill="#555" textLength="103.0" lengthAdjust="spacing" stroke="#fff" stroke-width="3" stroke-linejoin="round" paint-order="stroke">Avinguda Miramar</text></g>
<g transform="rotate(8 520 905)"><text x="520" y="905" font-family="Liberation Sans" font-weight="400" font-size="12.86" fill="#555" textLength="62.0" lengthAdjust="spacing" stroke="#fff" stroke-width="3" stroke-linejoin="round" paint-order="stroke">de l&#39;Estadi</text></g>
<g transform="rotate(-60 420 570)"><text x="395" y="570" font-family="Liberation Sans" font-weight="400" font-size="12.14" fill="#555" textLength="35.0" lengthAdjust="spacing" stroke="#fff" stroke-width="3" stroke-linejoin="round" paint-order="stroke">derlín</text></g>
<g transform="rotate(20 961 757)"><text x="961" y="757" font-family="Liberation Sans" font-weight="400" font-size="12.14" fill="#4a8ab8" textLength="59.0" lengthAdjust="spacing" stroke="#fff" stroke-width="3" stroke-linejoin="round" paint-order="stroke">Barcelona</text></g>
<g transform="rotate(79 1014 778)"><text x="1014" y="778" font-family="Liberation Sans" font-weight="400" font-size="12.14" fill="#4a8ab8" textLength="78.0" lengthAdjust="spacing" stroke="#fff" stroke-width="3" stroke-linejoin="round" paint-order="stroke">,ES - Génova,IT</text></g>
<g transform="rotate(58 957 815)"><text x="957" y="815" font-family="Liberation Sans" font-weight="400" font-size="12.14" fill="#4a8ab8" textLength="118.0" lengthAdjust="spacing" stroke="#fff" stroke-width="3" stroke-linejoin="round" paint-order="stroke">Barcelona,ES - Porto</text></g>
<rect x="462.2" y="729.6" width="37.7" height="11.7" rx="1.5" fill="#d2625f"/><text x="481" y="739.3" text-anchor="middle" font-family="Liberation Sans" font-weight="700" font-size="10.5" fill="#fff">N-340</text>
<rect x="414.9" y="832.2" width="31.2" height="12.4" rx="1.5" fill="#d2625f"/><text x="430.5" y="842.2" text-anchor="middle" font-family="Liberation Sans" font-weight="700" font-size="10.5" fill="#fff">C-31</text>
<rect x="903" y="767.4" width="31.5" height="11.6" rx="1.5" fill="#3f7dc8"/><text x="918.7" y="777" text-anchor="middle" font-family="Liberation Sans" font-weight="700" font-size="10" fill="#fff">B-10</text>
<rect x="521" y="742" width="13" height="13" rx="3" fill="#9ac653" stroke="#eef6dd" stroke-width="1"/><text x="527.5" y="752" text-anchor="middle" font-family="Liberation Sans" font-size="8" fill="#eef6dd">ev</text>
<rect x="1031.5" y="552" width="17" height="17" rx="5" fill="#56677e" stroke="#fff" stroke-width="1.8"/><rect x="1036" y="555.5" width="8" height="8" rx="2" fill="#fff"/><rect x="1037.2" y="556.8" width="5.6" height="2.6" fill="#56677e"/><circle cx="1038" cy="561" r="0.8" fill="#56677e"/><circle cx="1042" cy="561" r="0.8" fill="#56677e"/><path d="M1037,563.5 L1036,566 M1043,563.5 L1044,566" stroke="#fff" stroke-width="1"/>
<g><rect x="800.5" y="489.5" width="48.5" height="21.5" fill="#7a7a7a"/><rect x="800.5" y="487.5" width="48.5" height="2.5" fill="#9b9b9b"/><rect x="817.8" y="470" width="14.5" height="41" fill="#b9b9b9"/><rect x="816.5" y="468.5" width="17" height="3" fill="#8a8a8a"/><rect x="824.2" y="464" width="1.8" height="5" fill="#666"/></g>
<g fill="#4a4a4a"><rect x="803.0" y="493.0" width="2.4" height="3"/><rect x="803.0" y="499.5" width="2.4" height="3"/><rect x="807.2" y="493.0" width="2.4" height="3"/><rect x="807.2" y="499.5" width="2.4" height="3"/><rect x="811.4" y="493.0" width="2.4" height="3"/><rect x="811.4" y="499.5" width="2.4" height="3"/><rect x="835.0" y="493.0" width="2.4" height="3"/><rect x="835.0" y="499.5" width="2.4" height="3"/><rect x="839.2" y="493.0" width="2.4" height="3"/><rect x="839.2" y="499.5" width="2.4" height="3"/><rect x="843.4" y="493.0" width="2.4" height="3"/><rect x="843.4" y="499.5" width="2.4" height="3"/><rect x="820.5" y="474.0" width="2.4" height="3.2"/><rect x="820.5" y="480.5" width="2.4" height="3.2"/><rect x="820.5" y="487.0" width="2.4" height="3.2"/><rect x="820.5" y="493.5" width="2.4" height="3.2"/><rect x="820.5" y="500.0" width="2.4" height="3.2"/><rect x="825.3" y="474.0" width="2.4" height="3.2"/><rect x="825.3" y="480.5" width="2.4" height="3.2"/><rect x="825.3" y="487.0" width="2.4" height="3.2"/><rect x="825.3" y="493.5" width="2.4" height="3.2"/><rect x="825.3" y="500.0" width="2.4" height="3.2"/><rect x="823.5" y="506" width="3" height="5"/></g>
<path d="M933,675 L933,710" fill="none" stroke="#555" stroke-width="1.5" stroke-linejoin="round" stroke-linecap="round" />
<path d="M924,716 L944,716" fill="none" stroke="#444" stroke-width="2.5" stroke-linejoin="round" stroke-linecap="round" />
<path d="M638.8,711 L664,738 L712,739 L708,762 L765,789 L763,802 L775,805 L796,804 L816,799 L843,789 L853,788 L877,794 L886.5,766 L866,756 L868,744" fill="none" stroke="#ffffff" stroke-width="5.6" stroke-linejoin="round" stroke-linecap="round" opacity="0.55"/>
<path d="M895.6,747.5 L900.6,750 L902.2,762.4 L906,768.5 L915,768 L918.8,752.5 L938.6,722.7 L938.6,717.7" fill="none" stroke="#ffffff" stroke-width="5.6" stroke-linejoin="round" stroke-linecap="round" opacity="0.55"/>
<path d="M1031,568 L942,718" fill="none" stroke="#ffffff" stroke-width="5.6" stroke-linejoin="round" stroke-linecap="round" opacity="0.55"/>
<path d="M916.2,545.5 L919.1,541.6 L920.1,544.5 L994,618.4 L996,619.4 L951,690 L937,718" fill="none" stroke="#ffffff" stroke-width="5.6" stroke-linejoin="round" stroke-linecap="round" opacity="0.55"/>
<path d="M946.9,675.6 L954.3,682.2 L958,681" fill="none" stroke="#ffffff" stroke-width="5.6" stroke-linejoin="round" stroke-linecap="round" opacity="0.55"/>
<path d="M894,658.2 L903.9,671.4 L932,716 L938,718" fill="none" stroke="#ffffff" stroke-width="5.6" stroke-linejoin="round" stroke-linecap="round" opacity="0.55"/>
<path d="M949.3,569.8 L975.6,540.6" fill="none" stroke="#ffffff" stroke-width="5.6" stroke-linejoin="round" stroke-linecap="round" opacity="0.55"/>
<path d="M996,531.8 L1005.7,547.4 L1031,567.8" fill="none" stroke="#ffffff" stroke-width="5.6" stroke-linejoin="round" stroke-linecap="round" opacity="0.55"/>
<path d="M852,628.2 L820.9,640.8 L805.3,616.5 L805.3,610.6 L799.5,605" fill="none" stroke="#ffffff" stroke-width="5.6" stroke-linejoin="round" stroke-linecap="round" opacity="0.55"/>
<path d="M771,561 L780,570 L788,583 L791,591 L799.5,605 L784.8,620 L777,614 L767.7,621.7 L756.8,610.8 L771,561" fill="none" stroke="#ffffff" stroke-width="5.6" stroke-linejoin="round" stroke-linecap="round" opacity="0.55"/>
<path d="M697.6,606 L712.4,622.4 L733.4,601.4 L718,588 L697.6,606" fill="none" stroke="#ffffff" stroke-width="5.6" stroke-linejoin="round" stroke-linecap="round" opacity="0.55"/>
<path d="M613,492.2 L710,589 L718,588" fill="none" stroke="#ffffff" stroke-width="5.6" stroke-linejoin="round" stroke-linecap="round" opacity="0.55"/>
<path d="M650,527.6 L613,492.2 L597,506.6 L624,533 L624.5,539 L584,586 L624.5,632.5" fill="none" stroke="#ffffff" stroke-width="5.6" stroke-linejoin="round" stroke-linecap="round" opacity="0.55"/>
<path d="M696,570.3 L712.4,556.3 L716,559.4 L747.5,533 L750.6,535 L739.7,545.4 L737.3,565.6 L741,567 L753.7,581" fill="none" stroke="#ffffff" stroke-width="5.6" stroke-linejoin="round" stroke-linecap="round" opacity="0.55"/>
<path d="M612.5,620 L624.8,628.8" fill="none" stroke="#ffffff" stroke-width="5.6" stroke-linejoin="round" stroke-linecap="round" opacity="0.55"/>
<path d="M648.4,654.1 L588,711 L585.4,717.2 L601.1,732.9 L630,705.8" fill="none" stroke="#ffffff" stroke-width="5.6" stroke-linejoin="round" stroke-linecap="round" opacity="0.55"/>
<path d="M638.8,711 L664,738 L712,739 L708,762 L765,789 L763,802 L775,805 L796,804 L816,799 L843,789 L853,788 L877,794 L886.5,766 L866,756 L868,744" fill="none" stroke="#7049c6" stroke-width="3.5" stroke-linejoin="round" stroke-linecap="round" />
<path d="M895.6,747.5 L900.6,750 L902.2,762.4 L906,768.5 L915,768 L918.8,752.5 L938.6,722.7 L938.6,717.7" fill="none" stroke="#7049c6" stroke-width="3.5" stroke-linejoin="round" stroke-linecap="round" />
<path d="M1031,568 L942,718" fill="none" stroke="#7049c6" stroke-width="3.5" stroke-linejoin="round" stroke-linecap="round" />
<path d="M916.2,545.5 L919.1,541.6 L920.1,544.5 L994,618.4 L996,619.4 L951,690 L937,718" fill="none" stroke="#7049c6" stroke-width="3.5" stroke-linejoin="round" stroke-linecap="round" />
<path d="M946.9,675.6 L954.3,682.2 L958,681" fill="none" stroke="#7049c6" stroke-width="3.5" stroke-linejoin="round" stroke-linecap="round" />
<path d="M894,658.2 L903.9,671.4 L932,716 L938,718" fill="none" stroke="#7049c6" stroke-width="3.5" stroke-linejoin="round" stroke-linecap="round" />
<path d="M949.3,569.8 L975.6,540.6" fill="none" stroke="#7049c6" stroke-width="3.5" stroke-linejoin="round" stroke-linecap="round" />
<path d="M996,531.8 L1005.7,547.4 L1031,567.8" fill="none" stroke="#7049c6" stroke-width="3.5" stroke-linejoin="round" stroke-linecap="round" />
<path d="M852,628.2 L820.9,640.8 L805.3,616.5 L805.3,610.6 L799.5,605" fill="none" stroke="#7049c6" stroke-width="3.5" stroke-linejoin="round" stroke-linecap="round" />
<path d="M771,561 L780,570 L788,583 L791,591 L799.5,605 L784.8,620 L777,614 L767.7,621.7 L756.8,610.8 L771,561" fill="none" stroke="#7049c6" stroke-width="3.5" stroke-linejoin="round" stroke-linecap="round" />
<path d="M697.6,606 L712.4,622.4 L733.4,601.4 L718,588 L697.6,606" fill="none" stroke="#7049c6" stroke-width="3.5" stroke-linejoin="round" stroke-linecap="round" />
<path d="M613,492.2 L710,589 L718,588" fill="none" stroke="#7049c6" stroke-width="3.5" stroke-linejoin="round" stroke-linecap="round" />
<path d="M650,527.6 L613,492.2 L597,506.6 L624,533 L624.5,539 L584,586 L624.5,632.5" fill="none" stroke="#7049c6" stroke-width="3.5" stroke-linejoin="round" stroke-linecap="round" />
<path d="M696,570.3 L712.4,556.3 L716,559.4 L747.5,533 L750.6,535 L739.7,545.4 L737.3,565.6 L741,567 L753.7,581" fill="none" stroke="#7049c6" stroke-width="3.5" stroke-linejoin="round" stroke-linecap="round" />
<path d="M612.5,620 L624.8,628.8" fill="none" stroke="#7049c6" stroke-width="3.5" stroke-linejoin="round" stroke-linecap="round" />
<path d="M648.4,654.1 L588,711 L585.4,717.2 L601.1,732.9 L630,705.8" fill="none" stroke="#7049c6" stroke-width="3.5" stroke-linejoin="round" stroke-linecap="round" />
<path d="M598,499.5 C594,492 584.7,485 584.7,477 A13.3,13.3 0 1 1 611.3,477 C611.3,485 602,492 598,499.5Z" fill="#7b4fd8" stroke="#1f1636" stroke-width="1.6"/><text x="598.75" y="488.1" text-anchor="middle" font-family="Liberation Sans" font-weight="700" font-size="19.5" letter-spacing="-0.9" fill="#fff">14</text>
<path d="M624.5,540.0 C620.5,532.5 611.2,525.5 611.2,517.5 A13.3,13.3 0 1 1 637.8,517.5 C637.8,525.5 628.5,532.5 624.5,540.0Z" fill="#7b4fd8" stroke="#1f1636" stroke-width="1.6"/><text x="625.25" y="528.6" text-anchor="middle" font-family="Liberation Sans" font-weight="700" font-size="19.5" letter-spacing="-0.9" fill="#fff">15</text>
<path d="M684.6,556.0 C680.6,548.5 671.3000000000001,541.5 671.3000000000001,533.5 A13.3,13.3 0 1 1 697.9,533.5 C697.9,541.5 688.6,548.5 684.6,556.0Z" fill="#7b4fd8" stroke="#1f1636" stroke-width="1.6"/><text x="685.35" y="544.6" text-anchor="middle" font-family="Liberation Sans" font-weight="700" font-size="19.5" letter-spacing="-0.9" fill="#fff">13</text>
<path d="M720.2,556.0 C716.2,548.5 706.9000000000001,541.5 706.9000000000001,533.5 A13.3,13.3 0 1 1 733.5,533.5 C733.5,541.5 724.2,548.5 720.2,556.0Z" fill="#7b4fd8" stroke="#1f1636" stroke-width="1.6"/><text x="720.95" y="544.6" text-anchor="middle" font-family="Liberation Sans" font-weight="700" font-size="19.5" letter-spacing="-0.9" fill="#fff">12</text>
<path d="M729.4,600.0 C725.4,592.5 716.1,585.5 716.1,577.5 A13.3,13.3 0 1 1 742.6999999999999,577.5 C742.6999999999999,585.5 733.4,592.5 729.4,600.0Z" fill="#7b4fd8" stroke="#1f1636" stroke-width="1.6"/><text x="730.15" y="588.6" text-anchor="middle" font-family="Liberation Sans" font-weight="700" font-size="19.5" letter-spacing="-0.9" fill="#fff">11</text>
<path d="M762.2,609.0 C758.2,601.5 748.9000000000001,594.5 748.9000000000001,586.5 A13.3,13.3 0 1 1 775.5,586.5 C775.5,594.5 766.2,601.5 762.2,609.0Z" fill="#7b4fd8" stroke="#1f1636" stroke-width="1.6"/><text x="762.95" y="597.6" text-anchor="middle" font-family="Liberation Sans" font-weight="700" font-size="19.5" letter-spacing="-0.9" fill="#fff">10</text>
<path d="M890.3,553.5 C886.3,546 877.0,539 877.0,531 A13.3,13.3 0 1 1 903.5999999999999,531 C903.5999999999999,539 894.3,546 890.3,553.5Z" fill="#7b4fd8" stroke="#1f1636" stroke-width="1.6"/><text x="890.5999999999999" y="542.1" text-anchor="middle" font-family="Liberation Sans" font-weight="700" font-size="19.5" letter-spacing="0" fill="#fff">5</text>
<path d="M865.8,645.0 C861.8,637.5 852.5,630.5 852.5,622.5 A13.3,13.3 0 1 1 879.0999999999999,622.5 C879.0999999999999,630.5 869.8,637.5 865.8,645.0Z" fill="#7b4fd8" stroke="#1f1636" stroke-width="1.6"/><text x="866.0999999999999" y="633.6" text-anchor="middle" font-family="Liberation Sans" font-weight="700" font-size="19.5" letter-spacing="0" fill="#fff">9</text>
<path d="M883.8,666.0 C879.8,658.5 870.5,651.5 870.5,643.5 A13.3,13.3 0 1 1 897.0999999999999,643.5 C897.0999999999999,651.5 887.8,658.5 883.8,666.0Z" fill="#7b4fd8" stroke="#1f1636" stroke-width="1.6"/><text x="884.0999999999999" y="654.6" text-anchor="middle" font-family="Liberation Sans" font-weight="700" font-size="19.5" letter-spacing="0" fill="#fff">8</text>
<path d="M976.2,640.5 C972.2,633 962.9000000000001,626 962.9000000000001,618 A13.3,13.3 0 1 1 989.5,618 C989.5,626 980.2,633 976.2,640.5Z" fill="#7b4fd8" stroke="#1f1636" stroke-width="1.6"/><text x="976.5" y="629.1" text-anchor="middle" font-family="Liberation Sans" font-weight="700" font-size="19.5" letter-spacing="0" fill="#fff">6</text>
<path d="M945.7,677.5 C941.7,670 932.4000000000001,663 932.4000000000001,655 A13.3,13.3 0 1 1 959.0,655 C959.0,663 949.7,670 945.7,677.5Z" fill="#7b4fd8" stroke="#1f1636" stroke-width="1.6"/><text x="946.0" y="666.1" text-anchor="middle" font-family="Liberation Sans" font-weight="700" font-size="19.5" letter-spacing="0" fill="#fff">7</text>
<path d="M632.7,664.5 C628.7,657 619.4000000000001,650 619.4000000000001,642 A13.3,13.3 0 1 1 646.0,642 C646.0,650 636.7,657 632.7,664.5Z" fill="#7b4fd8" stroke="#1f1636" stroke-width="1.6"/><text x="633.45" y="653.1" text-anchor="middle" font-family="Liberation Sans" font-weight="700" font-size="19.5" letter-spacing="-0.9" fill="#fff">16</text>
<path d="M588.5,711.5 C584.5,704 575.2,697 575.2,689 A13.3,13.3 0 1 1 601.8,689 C601.8,697 592.5,704 588.5,711.5Z" fill="#7b4fd8" stroke="#1f1636" stroke-width="1.6"/><text x="589.25" y="700.1" text-anchor="middle" font-family="Liberation Sans" font-weight="700" font-size="19.5" letter-spacing="-0.9" fill="#fff">17</text>
<path d="M882.4,760.5 C878.4,753 869.1,746 869.1,738 A13.3,13.3 0 1 1 895.6999999999999,738 C895.6999999999999,746 886.4,753 882.4,760.5Z" fill="#7b4fd8" stroke="#1f1636" stroke-width="1.6"/><text x="882.6999999999999" y="749.1" text-anchor="middle" font-family="Liberation Sans" font-weight="700" font-size="19.5" letter-spacing="0" fill="#fff">2</text>
<path d="M777,803.5 C773,796 763.7,789 763.7,781 A13.3,13.3 0 1 1 790.3,781 C790.3,789 781,796 777,803.5Z" fill="#7b4fd8" stroke="#1f1636" stroke-width="1.6"/><text x="777.3" y="792.1" text-anchor="middle" font-family="Liberation Sans" font-weight="700" font-size="19.5" letter-spacing="0" fill="#fff">1</text>
<path d="M983.6,544.5 C979.6,537 970.3000000000001,530 970.3000000000001,522 A13.3,13.3 0 1 1 996.9,522 C996.9,530 987.6,537 983.6,544.5Z" fill="#7b4fd8" stroke="#1f1636" stroke-width="1.6"/><text x="983.9" y="533.1" text-anchor="middle" font-family="Liberation Sans" font-weight="700" font-size="19.5" letter-spacing="0" fill="#fff"></text>
<path d="M978,522 L983.6,519 L989.2,522 L983.6,525Z M978,525 L983.6,528 L989.2,525 M978,528 L983.6,531 L989.2,528" fill="none" stroke="#fff" stroke-width="1.2"/>
<circle cx="995" cy="510.5" r="7.5" fill="#e05a52"/><text x="995" y="514.8" text-anchor="middle" font-family="Liberation Sans" font-weight="700" font-size="11.5" fill="#fff">2</text>
<path d="M638.8,714.5 C634.5,707 625.5,700 625.5,689.5 A13.3,13.3 0 1 1 652.1,689.5 C652.1,700 643,707 638.8,714.5Z" fill="#7b4fd8"/><circle cx="638.8" cy="689.3" r="9.6" fill="#fff"/>
<path d="M634.8,689.5 L635.8,685.6 L641.8,685.6 L642.8,689.5 M633.6,689.5 L644,689.5 L644,693.2 L633.6,693.2Z M634.5,693.2 L634.5,694.8 M643.1,693.2 L643.1,694.8" fill="none" stroke="#6a44c0" stroke-width="1.3" stroke-linejoin="round"/>
<rect x="1033" y="779" width="48" height="98" fill="#fff" stroke="#e8e8e8" stroke-width="0.6"/><line x1="1039" y1="827.4" x2="1075" y2="827.4" stroke="#e6e6e6" stroke-width="1"/>
<path d="M1046.7,803 L1066.7,803 M1056.7,793 L1056.7,813" stroke="#555" stroke-width="2.2"/><path d="M1046.7,852.2 L1066.7,852.2" stroke="#555" stroke-width="2.4"/>
</g></svg>
<span id="logo_a" class="t" style="left:174.75px;top:135.29px;font-size:31.43px;line-height:31.43px;font-weight:700;color:#1b1b1b;letter-spacing:-1.000px;">Ants</span>
<span id="logo_r" class="t" style="left:241.50px;top:135.29px;font-size:31.43px;line-height:31.43px;font-weight:400;color:#1b1b1b;letter-spacing:-0.751px;-webkit-text-stroke:0.8px #fff;">Route</span>
<span id="wh" class="t" style="left:374.00px;top:141.69px;font-size:15.43px;line-height:15.43px;font-weight:400;color:#222;letter-spacing:0.721px;">Warehouse</span>
<span id="hay" class="t" style="left:486.75px;top:141.89px;font-size:15.43px;line-height:15.43px;font-weight:400;color:#333;letter-spacing:0.580px;">Hayange</span>
<span id="plan" class="t" style="left:805.75px;top:141.64px;font-size:15.71px;line-height:15.71px;font-weight:400;color:#1e1e1e;letter-spacing:0.597px;">Plan</span>
<span id="org" class="t" style="left:892.38px;top:141.64px;font-size:15.71px;line-height:15.71px;font-weight:400;color:#4f92dc;letter-spacing:0.497px;">Organize</span>
<span id="mon" class="t" style="left:1012.75px;top:141.64px;font-size:15.71px;line-height:15.71px;font-weight:400;color:#1e1e1e;letter-spacing:0.848px;">Monitor</span>
<span id="ana" class="t" style="left:1125.50px;top:141.64px;font-size:15.71px;line-height:15.71px;font-weight:400;color:#1e1e1e;letter-spacing:0.036px;">Analyze</span>
<span id="cus" class="t" style="left:1370.00px;top:141.64px;font-size:15.71px;line-height:15.71px;font-weight:400;color:#1e1e1e;letter-spacing:0.340px;">Customers</span>
<span id="res" class="t" style="left:1502.75px;top:141.64px;font-size:15.71px;line-height:15.71px;font-weight:400;color:#1e1e1e;letter-spacing:0.016px;">Resources</span>
<span id="set" class="t" style="left:1631.97px;top:141.64px;font-size:15.71px;line-height:15.71px;font-weight:400;color:#1e1e1e;letter-spacing:0.533px;">Settings</span>
<span id="cj" class="t" style="left:1835.30px;top:142.14px;font-size:13.71px;line-height:13.71px;font-weight:700;color:#ffffff;letter-spacing:0.347px;">CJ</span>
<span id="agh" class="t" style="left:426.40px;top:214.39px;font-size:20.71px;line-height:20.71px;font-weight:400;color:#d4875b;letter-spacing:1.416px;">Agenda</span>
<span id="day" class="t" style="left:543.35px;top:216.14px;font-size:15.71px;line-height:15.71px;font-weight:400;color:#333;letter-spacing:0.144px;">Day</span>
<span id="date" class="t" style="left:794.58px;top:216.13px;font-size:15.14px;line-height:15.14px;font-weight:400;color:#333;letter-spacing:-0.409px;">14/11/2025</span>
<span id="reopt" class="t" style="left:1501.40px;top:215.54px;font-size:16.43px;line-height:16.43px;font-weight:700;color:#ffffff;letter-spacing:-0.471px;">Reoptimize routes</span>
<span id="s_ag" class="t" style="left:165.50px;top:278.04px;font-size:15.71px;line-height:15.71px;font-weight:400;color:#5b9be0;letter-spacing:0.343px;">Agenda</span>
<span id="s_rt" class="t" style="left:164.25px;top:328.34px;font-size:15.71px;line-height:15.71px;font-weight:400;color:#222;letter-spacing:0.329px;">Routes</span>
<span id="s_mp" class="t" style="left:164.25px;top:378.64px;font-size:15.71px;line-height:15.71px;font-weight:400;color:#222;letter-spacing:1.549px;">Map</span>
<span id="s_ls" class="t" style="left:164.25px;top:429.64px;font-size:15.71px;line-height:15.71px;font-weight:400;color:#222;letter-spacing:0.210px;">List of deliveries</span>
<span id="title" class="t" style="left:614.25px;top:277.81px;font-size:22.29px;line-height:22.29px;font-weight:400;color:#333;letter-spacing:0.593px;">Routes - Julia Fernandez | v2</span>
<span id="st1" class="t" style="left:463.07px;top:336.43px;font-size:15.14px;line-height:15.14px;font-weight:400;color:#555;letter-spacing:0.646px;">8:00 AM</span>
<span id="st2" class="t" style="left:595.75px;top:336.13px;font-size:15.14px;line-height:15.14px;font-weight:400;color:#555;letter-spacing:0.167px;">3:45 PM</span>
<span id="st3" class="t" style="left:728.27px;top:336.13px;font-size:15.14px;line-height:15.14px;font-weight:400;color:#555;letter-spacing:0.184px;">14.9 km</span>
<span id="st4" class="t" style="left:860.12px;top:336.13px;font-size:15.14px;line-height:15.14px;font-weight:400;color:#555;letter-spacing:-1.000px;">17</span>
<span id="st5" class="t" style="left:993.50px;top:336.13px;font-size:15.14px;line-height:15.14px;font-weight:400;color:#555;letter-spacing:1.696px;">40min</span>
<span id="st6" class="t" style="left:462.95px;top:365.03px;font-size:15.14px;line-height:15.14px;font-weight:400;color:#555;letter-spacing:1.105px;">7h05</span>
<span id="st7" class="t" style="left:596.90px;top:364.93px;font-size:15.14px;line-height:15.14px;font-weight:400;color:#555;letter-spacing:0.423px;">€148.84</span>
<span id="st8" class="t" style="left:729.00px;top:364.93px;font-size:15.14px;line-height:15.14px;font-weight:400;color:#555;letter-spacing:0.203px;">€170.00</span>
<span id="st9" class="t" style="left:861.25px;top:364.93px;font-size:15.14px;line-height:15.14px;font-weight:400;color:#555;letter-spacing:-0.903px;">€21.16</span>
<span id="pill1" class="t" style="left:436.00px;top:403.56px;font-size:12.29px;line-height:12.29px;font-weight:700;color:#222;letter-spacing:-0.317px;">PALLETS : 1 / 10 (UNITS)</span>
<span id="pill2" class="t" style="left:601.25px;top:403.56px;font-size:12.29px;line-height:12.29px;font-weight:700;color:#222;letter-spacing:0.197px;">WEIGHT : 100.555 / 3000 (KG)</span>
<span id="filter" class="t" style="left:1121.95px;top:329.89px;font-size:15.43px;line-height:15.43px;font-weight:400;color:#222;letter-spacing:0.500px;">Filter the display</span>
<span id="pl1b" class="t" style="left:1203.00px;top:377.13px;font-size:15.14px;line-height:15.14px;font-weight:700;color:#1e1e1e;letter-spacing:0.196px;">Planned route start time</span>
<span id="pl1c" class="t" style="left:1383.62px;top:377.13px;font-size:15.14px;line-height:15.14px;font-weight:700;color:#1e1e1e;letter-spacing:0.000px;">:</span>
<span id="pl1r" class="t" style="left:1390.47px;top:377.13px;font-size:15.14px;line-height:15.14px;font-weight:400;color:#222;letter-spacing:-0.045px;">14/11/2025 08:00</span>
<span id="pl2b" class="t" style="left:1203.00px;top:398.73px;font-size:15.14px;line-height:15.14px;font-weight:700;color:#1e1e1e;letter-spacing:0.077px;">Departure from vehicle parking area</span>
<span id="pl2c" class="t" style="left:1468.62px;top:398.73px;font-size:15.14px;line-height:15.14px;font-weight:700;color:#1e1e1e;letter-spacing:0.000px;">:</span>
<span id="pl2r" class="t" style="left:1475.65px;top:398.73px;font-size:15.14px;line-height:15.14px;font-weight:400;color:#222;letter-spacing:0.266px;">Carrer de Rocafort, 29, 08015 Barcelona, Espagne</span>
<span id="jt" class="t" style="left:1163.75px;top:456.60px;font-size:19.00px;line-height:19.00px;font-weight:700;color:#1e1e1e;letter-spacing:0.601px;">Julien Thomas</span>
<span id="adb" class="t" style="left:1163.75px;top:484.25px;font-size:15.00px;line-height:15.00px;font-weight:700;color:#1e1e1e;letter-spacing:0.637px;">Address</span>
<span id="adc" class="t" style="left:1229.62px;top:484.25px;font-size:15.00px;line-height:15.00px;font-weight:700;color:#1e1e1e;letter-spacing:0.000px;">:</span>
<span id="adr" class="t" style="left:1238.25px;top:484.25px;font-size:15.00px;line-height:15.00px;font-weight:400;color:#222;letter-spacing:0.892px;">Carrer Nou de la Rambla, 175,</span>
<span id="ad2" class="t" style="left:1163.38px;top:508.10px;font-size:15.00px;line-height:15.00px;font-weight:400;color:#222;letter-spacing:1.327px;">Sants-Montjuïc, 08004 Barcelona,</span>
<span id="ad3" class="t" style="left:1162.88px;top:531.25px;font-size:15.00px;line-height:15.00px;font-weight:400;color:#222;letter-spacing:1.750px;">Espagne</span>
<span id="badge" class="t" style="left:1762.62px;top:495.31px;font-size:12.57px;line-height:12.57px;font-weight:700;color:#ffffff;letter-spacing:1.648px;">08:03</span>
<span id="one" class="t" style="left:1133.75px;top:492.57px;font-size:12.86px;line-height:12.86px;font-weight:700;color:#ffffff;letter-spacing:0.000px;">1</span>
<span id="cust" class="t" style="left:1133.75px;top:572.97px;font-size:18.86px;line-height:18.86px;font-weight:700;color:#1e1e1e;letter-spacing:0.509px;">CUSTOMER</span>
<span id="ohb" class="t" style="left:1134.00px;top:606.11px;font-size:14.57px;line-height:14.57px;font-weight:700;color:#1e1e1e;letter-spacing:0.339px;">Opening hours</span>
<span id="ohc" class="t" style="left:1244.12px;top:606.11px;font-size:14.57px;line-height:14.57px;font-weight:700;color:#1e1e1e;letter-spacing:0.000px;">:</span>
<span id="ohr" class="t" style="left:1253.20px;top:606.11px;font-size:14.57px;line-height:14.57px;font-weight:400;color:#222;letter-spacing:0.824px;">Always open</span>
<span id="caf" class="t" style="left:1504.30px;top:606.11px;font-size:14.57px;line-height:14.57px;font-weight:700;color:#1e1e1e;letter-spacing:0.340px;">Customer attached files:</span>
<span id="deliv" class="t" style="left:1133.35px;top:691.57px;font-size:18.86px;line-height:18.86px;font-weight:700;color:#1e1e1e;letter-spacing:0.508px;">DELIVERY</span>
<span id="durb" class="t" style="left:1133.72px;top:724.79px;font-size:14.71px;line-height:14.71px;font-weight:700;color:#1e1e1e;letter-spacing:0.579px;">Duration</span>
<span id="durr" class="t" style="left:1200.75px;top:724.79px;font-size:14.71px;line-height:14.71px;font-weight:400;color:#222;letter-spacing:0.789px;">: 25min</span>
<span id="asg" class="t" style="left:1134.35px;top:746.79px;font-size:14.71px;line-height:14.71px;font-weight:700;color:#1e1e1e;letter-spacing:-0.021px;">Assigned driver :</span>
<span id="jf" class="t" style="left:1151.67px;top:768.69px;font-size:14.71px;line-height:14.71px;font-weight:400;color:#222;letter-spacing:0.605px;">Julia Fernandez | v2</span>
<span id="prb" class="t" style="left:1133.72px;top:790.09px;font-size:14.71px;line-height:14.71px;font-weight:700;color:#1e1e1e;letter-spacing:0.079px;">Price</span>
<span id="prr" class="t" style="left:1172.75px;top:790.09px;font-size:14.71px;line-height:14.71px;font-weight:400;color:#222;letter-spacing:0.204px;">: 10 €</span>
<span id="capb" class="t" style="left:1134.10px;top:822.69px;font-size:14.71px;line-height:14.71px;font-weight:700;color:#1e1e1e;letter-spacing:0.195px;">Capacities</span>
<span id="palb" class="t" style="left:1145.92px;top:855.49px;font-size:14.71px;line-height:14.71px;font-weight:700;color:#1e1e1e;letter-spacing:0.249px;">Pallets</span>
<span id="palr" class="t" style="left:1197.25px;top:855.49px;font-size:14.71px;line-height:14.71px;font-weight:400;color:#222;letter-spacing:0.108px;">: 1 (Units)</span>
<span id="wgb" class="t" style="left:1146.80px;top:877.09px;font-size:14.71px;line-height:14.71px;font-weight:700;color:#1e1e1e;letter-spacing:0.397px;">Weight</span>
<span id="wgr" class="t" style="left:1201.35px;top:877.09px;font-size:14.71px;line-height:14.71px;font-weight:400;color:#222;letter-spacing:-0.007px;">: 100.555 (Kg)</span>
<span id="daf" class="t" style="left:1503.92px;top:724.91px;font-size:14.57px;line-height:14.57px;font-weight:700;color:#1e1e1e;letter-spacing:0.292px;">Delivery attached files:</span>
</body></html>
